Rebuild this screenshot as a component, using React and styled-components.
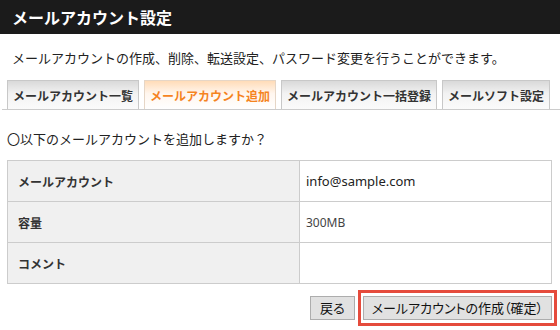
import React from "react";
import styled, { createGlobalStyle } from "styled-components";

const GlobalStyle = createGlobalStyle`
  body {
    margin: 0;
    background: #ffffff;
    font-family: "Noto Sans CJK JP", "Noto Sans", sans-serif;
    color: #222222;
  }
`;

const Page = styled.div`
  width: 560px;
  height: 330px;
  overflow: hidden;
`;

const Header = styled.h1`
  margin: 0;
  height: 34px;
  background: #1b1b1b;
  color: #ffffff;
  font-size: 16px;
  font-weight: bold;
  line-height: 34px;
  padding-left: 12px;
`;

const Lead = styled.p`
  margin: 0;
  padding: 14px 0 0 12px;
  height: 32px;
  font-size: 13px;
  line-height: 20px;
`;

const TabBar = styled.div`
  display: flex;
  gap: 5px;
  margin: 0 0 0 2px;
  padding-left: 5px;
  border-bottom: 1px solid #cccccc;
  height: 29px;
  align-items: flex-end;
`;

const Tab = styled.div`
  height: 28px;
  padding: 0 5px;
  border: 1px solid ${(p) => (p.active ? "#e6d6c6" : "#c8c8c8")};
  border-bottom: none;
  background: ${(p) =>
    p.active
      ? "linear-gradient(#ffdcb8, #fff6ee 45%, #ffffff)"
      : "linear-gradient(#d9d9d9, #f2f2f2 45%, #fbfbfb)"};
  color: ${(p) => (p.active ? "#f5841f" : "#333333")};
  font-size: 12px;
  font-weight: bold;
  line-height: 30px;
  white-space: nowrap;
`;

const Question = styled.p`
  margin: 0;
  padding: 19px 0 0 7px;
  height: 31px;
  font-size: 13px;
  line-height: 20px;
`;

const Table = styled.table`
  margin-left: 7px;
  width: 545px;
  border-collapse: collapse;
  table-layout: fixed;
`;

const Label = styled.th`
  box-sizing: border-box;
  width: 292px;
  height: 41px;
  padding: 0 0 0 10px;
  text-align: left;
  background: #f0f0f0;
  border: 1px solid #cccccc;
  font-size: 12px;
  font-weight: bold;
  color: #333333;
`;

const Value = styled.td`
  height: 40px;
  padding: 0 0 0 6px;
  border: 1px solid #cccccc;
  font-family: "Noto Sans", sans-serif;
  font-size: ${(p) => (p.small ? "12px" : "13px")};
  color: ${(p) => (p.small ? "#444444" : "#222222")};
`;

const Actions = styled.div`
  display: flex;
  justify-content: flex-end;
  align-items: center;
  gap: 3px;
  padding: 6px 3px 0 0;
`;

const Highlight = styled.div`
  border: 3px solid #e54b3c;
  padding: 3px 2px;
  display: flex;
`;

const Button = styled.button`
  height: 24px;
  padding: 0 ${(p) => (p.wide ? "8px" : "9px")};
  background: #e1e1e1;
  border: 1px solid #adadad;
  font-family: "Noto Sans CJK JP", sans-serif;
  font-feature-settings: "palt";
  font-size: 13px;
  color: #111111;
  line-height: 22px;
`;

export default function App() {
  return (
    <Page>
      <GlobalStyle />
      <Header>メールアカウント設定</Header>
      <Lead>メールアカウントの作成、削除、転送設定、パスワード変更を行うことができます。</Lead>
      <TabBar>
        <Tab>メールアカウント一覧</Tab>
        <Tab active>メールアカウント追加</Tab>
        <Tab>メールアカウント一括登録</Tab>
        <Tab>メールソフト設定</Tab>
      </TabBar>
      <Question>〇以下のメールアカウントを追加しますか？</Question>
      <Table>
        <tbody>
          <tr>
            <Label>メールアカウント</Label>
            <Value>info@sample.com</Value>
          </tr>
          <tr>
            <Label>容量</Label>
            <Value small>300MB</Value>
          </tr>
          <tr>
            <Label>コメント</Label>
            <Value />
          </tr>
        </tbody>
      </Table>
      <Actions>
        <Button>戻る</Button>
        <Highlight>
          <Button wide>メールアカウントの作成（確定）</Button>
        </Highlight>
      </Actions>
    </Page>
  );
}
